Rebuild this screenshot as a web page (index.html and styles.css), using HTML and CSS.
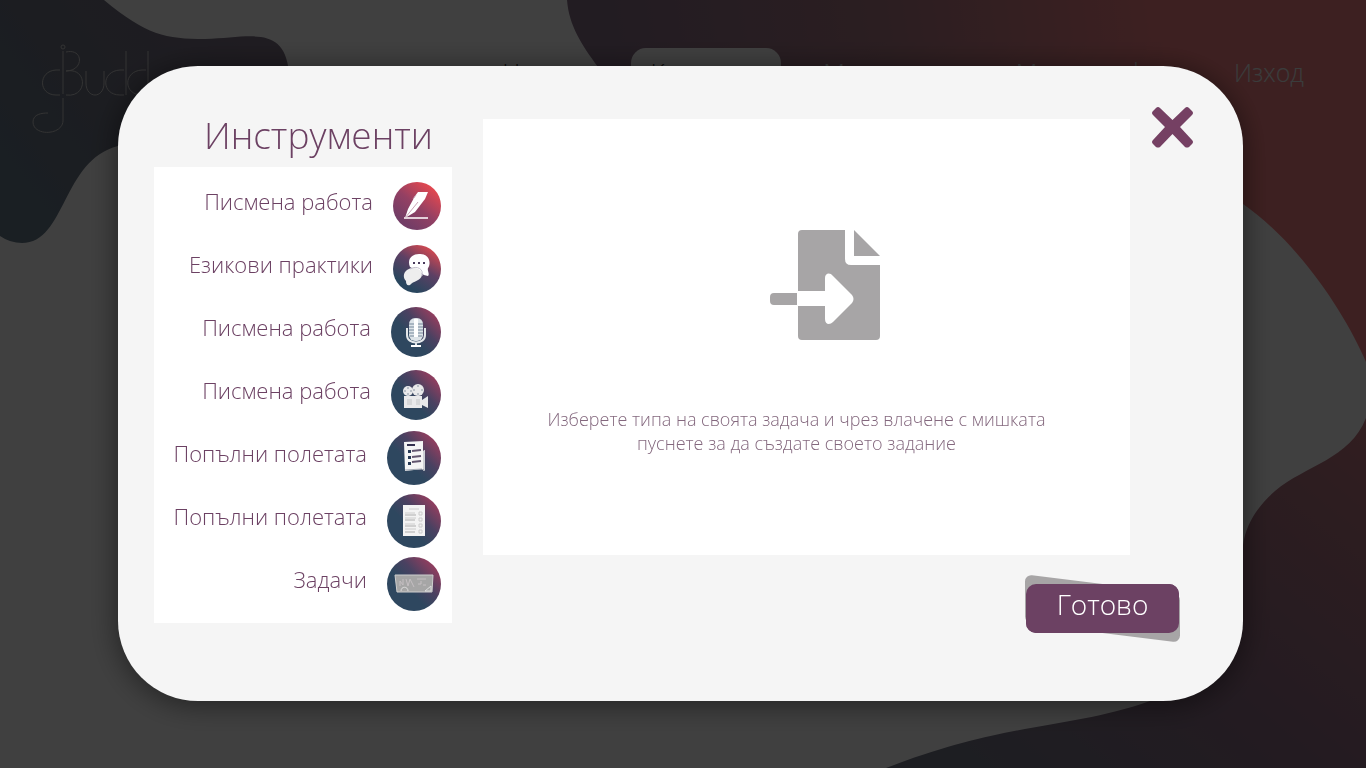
FILE: index.html
```html
<!DOCTYPE html>
<html lang="bg">
<head>
<meta charset="utf-8">
<meta name="viewport" content="width=device-width, initial-scale=1">
<title>Buddy – Инструменти</title>
<link rel="stylesheet" href="styles.css">
</head>
<body>
<div class="page">
  <svg class="backdrop" viewBox="0 0 1366 768" preserveAspectRatio="none" aria-hidden="true">
    <defs>
      <linearGradient id="blobLeft" gradientUnits="userSpaceOnUse" x1="20" y1="200" x2="240" y2="40">
        <stop offset="0" stop-color="#687c8c"/><stop offset=".45" stop-color="#707484"/><stop offset="1" stop-color="#7c7084"/>
      </linearGradient>
      <linearGradient id="blobRight" gradientUnits="userSpaceOnUse" x1="1000" y1="800" x2="1400" y2="300">
        <stop offset="0" stop-color="#747888"/><stop offset=".35" stop-color="#8c6c84"/><stop offset=".7" stop-color="#b47480"/><stop offset="1" stop-color="#e07c82"/>
      </linearGradient>
      <linearGradient id="blobTop" gradientUnits="userSpaceOnUse" x1="620" y1="100" x2="1160" y2="20">
        <stop offset="0" stop-color="#887088"/><stop offset=".5" stop-color="#ac7884"/><stop offset="1" stop-color="#f48084"/>
      </linearGradient>
    </defs>
    <path fill="url(#blobLeft)" d="M0 0H104C146 35 166 39 205 39C250 38 284 24 289 72C290 140 160 140 118 146C62 160 66 243 22 243Q10 243 0 236Z"/>
    <path fill="url(#blobTop)" d="M567 0C569 26 582 45 598 67C640 130 1100 130 1243 204C1300 244 1346 315 1366 362V0Z"/>
    <path fill="url(#blobRight)" d="M1366 418C1350 459 1306 465 1275 491C1259 505 1246 523 1243 545C1235 640 1200 690 1150 701C1068 730 1010 720 886 768H1366Z"/>
  </svg>
  <header class="topbar">
    <a class="logo" href="#" aria-label="Buddy">
      <svg width="132" height="92" viewBox="0 0 132 92" fill="none" stroke="currentColor" stroke-width="1" aria-hidden="true">
        <circle cx="30" cy="3" r="2"/>
        <path d="M30 7V50M30 54V77C29 92 0 92 0 78C0 70 9 69 15 69M33 8C51 4 51 27 33 27M33 27C55 23 55 54 33 51M27 26H23C5 27 5 51 23 51H27M53 27V39C53 55 71 55 71 39V27M93 7V51M91 26H87C68 27 68 51 87 51H91M115 7V51M113 26H109C90 27 90 51 109 51H113"/>
      </svg>
    </a>
    <nav class="menu">
      <a class="menu-link menu-link-dark" href="#">Начало</a>
      <a class="menu-link menu-link-active" href="#">Календар</a>
      <a class="menu-link" href="#">Материали</a>
      <a class="menu-link" href="#">Моят профил</a>
      <a class="menu-link" href="#">Изход</a>
    </nav>
  </header>
</div>

<div class="scrim">
  <section class="modal" role="dialog" aria-modal="true" aria-labelledby="tools-title">
    <aside class="tools">
      <h1 class="tools-title" id="tools-title">Инструменти</h1>
      <svg class="defs" width="0" height="0" aria-hidden="true">
        <defs>
          <linearGradient id="warm" x1=".25" y1=".85" x2=".85" y2=".1"><stop offset="0" stop-color="#733d66"/><stop offset=".45" stop-color="#944063"/><stop offset="1" stop-color="#e8484e"/></linearGradient>
          <linearGradient id="mixed" x1=".3" y1=".85" x2=".8" y2=".05"><stop offset="0" stop-color="#29465e"/><stop offset=".5" stop-color="#5d4064"/><stop offset="1" stop-color="#d8484f"/></linearGradient>
          <linearGradient id="cool" x1=".42" y1=".62" x2=".95" y2=".12"><stop offset="0" stop-color="#2e475f"/><stop offset=".4" stop-color="#4a4161"/><stop offset="1" stop-color="#a33d5e"/></linearGradient>
        </defs>
      </svg>
      <ul class="tool-list">
        <li><button class="tool" type="button"><span class="tool-label">Писмена работа</span>
          <svg class="icon-s" viewBox="0 0 48 48" aria-hidden="true"><circle cx="24" cy="24" r="24" fill="url(#warm)"/><path d="M22 14L25 10L35 10L32 17L22 30L12 36L15 27Z" fill="#fff"/><path d="M20 17L23 13M12 36L25 20" stroke="#c9a3b5" fill="none"/><path d="M11 36H35" stroke="#e4d0da" stroke-width="2"/></svg></button></li>
        <li><button class="tool" type="button"><span class="tool-label">Езикови практики</span>
          <svg class="icon-s" viewBox="0 0 48 48" aria-hidden="true"><circle cx="24" cy="24" r="24" fill="url(#mixed)"/><path d="M26 9C35 8 39 17 35 23C34 26 37 29 35 31Q31 31 28 28L17 22C14 15 18 9 26 9Z" fill="#fff"/><path d="M14 25C19 21 29 23 29 30C28 36 20 36 17 40C14 41 13 39 13 36C10 33 10 28 14 25Z" fill="#eee"/><path d="M17 24C24 20 31 24 29 31" fill="none" stroke="#c5c1ce"/><path d="M20 18h2M25 18h2M30 18h2" stroke="#493a5c" stroke-width="2"/></svg></button></li>
        <li><button class="tool" type="button"><span class="tool-label">Писмена работа</span>
          <svg class="icon-m" viewBox="0 0 50 50" aria-hidden="true"><circle cx="25" cy="25" r="25" fill="url(#cool)"/><rect x="18" y="11" width="14" height="23" rx="6" fill="#dce3e8"/><path d="M18 17H32M18 20H32M18 23H32M18 26H32M19 29H31" stroke="#75879a"/><path d="M23 12V30H27V12" fill="#fff"/><path d="M16 21V28C16 38 34 38 34 28V21M25 36V39" fill="none" stroke="#e3e7ea" stroke-width="2"/><path d="M20 39H30" stroke="#fff" stroke-width="2"/></svg></button></li>
        <li><button class="tool" type="button"><span class="tool-label">Писмена работа</span>
          <svg class="icon-m" viewBox="0 0 50 50" aria-hidden="true"><circle cx="25" cy="25" r="25" fill="url(#cool)"/><g fill="#e9e9eb"><circle cx="17" cy="21" r="5"/><circle cx="27" cy="20" r="6"/><rect x="13" y="26" width="18" height="12"/><path d="M31 30L37 26V38L31 35Z"/></g><g fill="#a8b0bb"><circle cx="17" cy="18" r="1"/><circle cx="14" cy="21" r="1"/><circle cx="20" cy="21" r="1"/><circle cx="17" cy="24" r="1"/><circle cx="27" cy="16" r="1"/><circle cx="23" cy="20" r="1"/><circle cx="31" cy="20" r="1"/><circle cx="27" cy="24" r="1"/></g><path d="M16 29h5v6h-5zM25 29h4v6h-4z" fill="#d6d7d9"/></svg></button></li>
        <li><button class="tool" type="button"><span class="tool-label">Попълни полетата</span>
          <svg class="icon-l" viewBox="0 0 54 54" aria-hidden="true"><circle cx="27" cy="27" r="27" fill="url(#cool)"/><path d="M17 11L36 10V20L38 19V40L36 38L18 40Z" fill="#f5f5f5"/><path d="M18 39L35 38L37 40V20" fill="none" stroke="#a6abb5"/><path d="M20 14h8" stroke="#34314f" stroke-width="2"/><path d="M21 19h3v3h-3zM21 25h3v3h-3zM21 31h3v3h-3z" fill="#283a55"/><path d="M25 20l9-1M25 26l9-1M25 31l9-1" stroke="#62566f" stroke-width="2"/></svg></button></li>
        <li><button class="tool" type="button"><span class="tool-label">Попълни полетата</span>
          <svg class="icon-l" viewBox="0 0 54 54" aria-hidden="true"><circle cx="27" cy="27" r="27" fill="url(#cool)"/><path d="M16 11H38V42H16Z" fill="#f3f3f3"/><path d="M22 15h10M18 19h10M18 24h11M18 30h10M18 35h11" stroke="#ccc"/><path d="M18 21h11M18 26h10M18 32h11M18 38h10" stroke="#d0d0d0" stroke-width="2"/><path d="M32 18h3v3h-3zM32 24h3v3h-3zM32 30h3v3h-3zM32 36h3v3h-3z" fill="none" stroke="#ccc"/></svg></button></li>
        <li><button class="tool" type="button"><span class="tool-label">Задачи</span>
          <svg class="icon-l" viewBox="0 0 54 54" aria-hidden="true"><circle cx="27" cy="27" r="27" fill="url(#cool)"/><path d="M8 18L46 18L45 35L10 35Z" fill="#a6a6a6" stroke="#cecece"/><path d="M13 29v-5l3 4v-6M19 22l2 7 2-7 4 8M30 22h9M31 27h3v-3M36 28h3" fill="none" stroke="#c5bfc2"/><path d="M14 34C14 29 21 29 21 34M38 34l6-5v5z" fill="none" stroke="#ddd"/></svg></button></li>
      </ul>
    </aside>
    <div class="work">
      <div class="dropzone">
        <svg class="drop-icon" width="112" height="112" viewBox="0 0 112 112" aria-hidden="true">
          <path fill="#a7a5a6" d="M32 1H75V30Q75 36 81 36H110V107Q110 111 106 111H32Q28 111 28 107V77H55V90C55 96 60 96 63 93L82 74Q85 70 82 66L63 47C60 43 55 44 55 49V62H28V5Q28 1 32 1ZM84 1L110 27H84ZM4 64H27V76H4Q0 76 0 72V68Q0 64 4 64Z"/>
        </svg>
        <p class="drop-text">Изберете типа на своята задача и чрез влачене с мишката<br>пуснете за да създате своето задание</p>
      </div>
    </div>
    <button class="close" type="button" aria-label="Затвори">
      <svg width="41" height="41" viewBox="0 0 41 41" aria-hidden="true"><path fill="#754063" d="M4 1Q6 -1 8 1L20.500 13L33 1Q35 -1 37 1L40 4Q42 6 40 8L28 20L40 33Q42 35 40 37L37 40Q35 41 33 40L20.500 27L8 40Q6 41 4 40L1 37Q-1 35 1 33L13 20L1 8Q-1 6 1 4Z"/></svg>
    </button>
    <button class="done" type="button">Готово</button>
  </section>
</div>
</body>
</html>
```
FILE: styles.css
```css
* {
  box-sizing: border-box;
}

body {
  margin: 0;
  background: #fff;
  color: #6c4163;
  font-family: "Open Sans", "Noto Sans", sans-serif;
  font-weight: 300;
}

button {
  border: 0;
  background: none;
  color: inherit;
  font: inherit;
  cursor: pointer;
}

svg {
  display: block;
  flex: none;
}

.page {
  position: relative;
  min-height: 100vh;
  overflow: hidden;
}

.backdrop {
  position: absolute;
  inset: 0;
  width: 100%;
  height: 100%;
}

.topbar {
  position: relative;
  display: flex;
  justify-content: space-between;
  align-items: flex-start;
  padding: 44px 43px 0 33px;
}

.logo {
  color: #ccc;
}

.logo svg {
  overflow: visible;
}

.menu {
  display: flex;
  gap: 23px;
  padding-top: 4px;
}

.menu-link {
  padding: 6px 19px;
  border-radius: 15px;
  color: #e8f0f0;
  font-size: 25px;
  line-height: 36px;
  text-decoration: none;
}

.menu-link-dark {
  color: #333;
}

.menu-link-active {
  background: #fff;
  color: #333;
}

.scrim {
  position: fixed;
  inset: 0;
  overflow: auto;
  padding: 66px 123px 66px 118px;
  background: rgba(0, 0, 0, .75);
}

.modal {
  display: grid;
  grid-template-columns: 298px 1fr 41px;
  grid-template-rows: auto 1fr;
  column-gap: 22px;
  padding: 41px 50px 58px 36px;
  border-radius: 80px;
  background: #f5f5f5;
  box-shadow: 0 3px 30px rgba(0, 0, 0, .5);
}

.tools {
  grid-row: 1 / 3;
  padding-bottom: 20px;
}

.defs {
  position: absolute;
}

.tools-title {
  margin: 0;
  padding: 4px 19px 8px 0;
  font-size: 37px;
  font-weight: 300;
  line-height: 48px;
  text-align: right;
}

.tool-list {
  margin: 0;
  padding: 7px 11px 8px;
  background: #fff;
  list-style: none;
}

.tool {
  display: flex;
  justify-content: flex-end;
  align-items: center;
  gap: 20px;
  width: 100%;
  height: 63px;
  padding: 0;
}

.tool-label {
  padding-bottom: 10px;
  font-size: 22px;
  line-height: 32px;
  white-space: nowrap;
}

.icon-s {
  width: 48px;
  height: 48px;
}

.icon-m {
  width: 50px;
  height: 50px;
}

.icon-l {
  width: 54px;
  height: 54px;
}

.work {
  padding: 12px 0 0 9px;
}

.dropzone {
  display: flex;
  flex-direction: column;
  align-items: center;
  gap: 66px;
  padding: 110px 20px 100px 0;
  background: #fff;
}

.drop-icon {
  margin-left: 58px;
}

.drop-text {
  margin: 0;
  color: #84687e;
  font-size: 18px;
  line-height: 24px;
  text-align: center;
}

.close {
  align-self: start;
  padding: 0;
}

.done {
  position: relative;
  grid-column: 2 / 4;
  justify-self: end;
  align-self: start;
  isolation: isolate;
  width: 153px;
  margin: 29px 14px 0 0;
  padding: 0 0 8px;
  border-radius: 10px;
  background: #6c4163;
  color: #fff;
  font-size: 28px;
  line-height: 41px;
}

.done::before {
  content: "";
  position: absolute;
  inset: 0 -1px;
  z-index: -2;
  border-radius: 7px;
  background: #a7a5a6;
  transform: skewY(7deg);
}

.done::after {
  content: "";
  position: absolute;
  inset: 0;
  z-index: -1;
  border-radius: 10px;
  background: #6c4163;
}
```
